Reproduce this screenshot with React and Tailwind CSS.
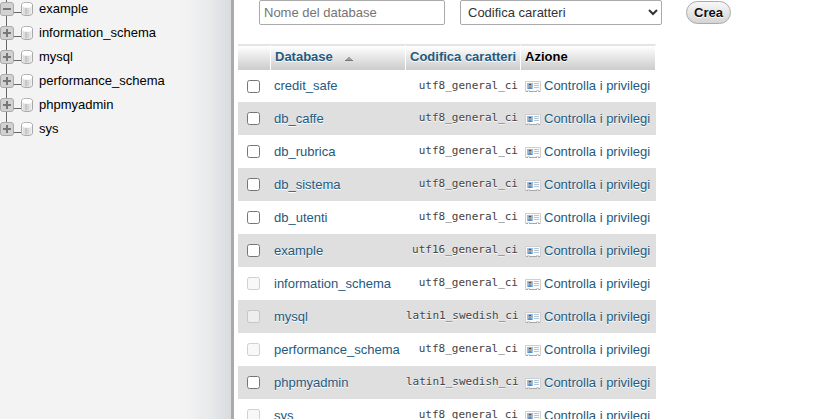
import React from "react";

const tree = [
  { name: "example", open: true },
  { name: "information_schema" },
  { name: "mysql" },
  { name: "performance_schema" },
  { name: "phpmyadmin" },
  { name: "sys" },
];

const databases = [
  { name: "credit_safe", collation: "utf8_general_ci" },
  { name: "db_caffe", collation: "utf8_general_ci" },
  { name: "db_rubrica", collation: "utf8_general_ci" },
  { name: "db_sistema", collation: "utf8_general_ci" },
  { name: "db_utenti", collation: "utf8_general_ci" },
  { name: "example", collation: "utf16_general_ci" },
  { name: "information_schema", collation: "utf8_general_ci", system: true },
  { name: "mysql", collation: "latin1_swedish_ci", system: true },
  { name: "performance_schema", collation: "utf8_general_ci", system: true },
  { name: "phpmyadmin", collation: "latin1_swedish_ci" },
  { name: "sys", collation: "utf8_general_ci", system: true },
];

function TreeIcon({ open, last }) {
  return (
    <svg width="34" height="24" viewBox="0 0 34 24" className="shrink-0" aria-hidden="true">
      <path d={last ? "M6.5 0V8" : "M6.5 0V24"} stroke="#666" />
      <path d="M13 15.5H21" stroke="#666" />
      <rect x="0.5" y="5.5" width="13" height="13" rx="2.5" fill="#d2d2d2" stroke="#aaa" />
      <path d={open ? "M3 12H11" : "M3 12H11M7 8V16"} stroke="#777" strokeWidth="2" />
      <path d="M21.5 7.5C21.5 4.8 32.5 4.8 32.5 7.5V16.5C32.5 19.2 21.5 19.2 21.5 16.5Z" fill="#f0f0f0" stroke="#a8a8a8" />
      <path d="M23 10V16.3Q24 17.4 25 17.6V10.8Z" fill="#dedede" />
      <path d="M25 10.8V17.6H27V11Z" fill="#c6c6c6" />
      <path d="M27 11V17.6H29V10.8Z" fill="#d6d6d6" />
      <path d="M29 10.8V17.6L31 16.5V10Z" fill="#e4e4e4" />
      <ellipse cx="27" cy="8.2" rx="4.8" ry="2.4" fill="#fff" />
    </svg>
  );
}

function CardIcon() {
  return (
    <svg width="16" height="16" viewBox="0 0 16 16" className="mt-0.5 shrink-0" aria-hidden="true">
      <path d="M0.5 2.5H15.5V12.5H13.5V11.5H11.5V12.5H4.5V11.5H2.5V12.5H0.5Z" fill="#fbfbfb" stroke="#cfcfcf" />
      <path d="M1 12.5H3M4 12.5H12M13 12.5H15" stroke="#a8a8a8" />
      <rect x="2" y="4" width="6" height="6" fill="#8fc0f0" />
      <path d="M3 10Q3 8 5 8T7 10Z" fill="#4a8ad0" />
      <circle cx="5" cy="6.5" r="1.5" fill="#c98f62" />
      <path d="M3.5 6Q5 3.5 6.5 6Z" fill="#6b4528" />
      <path d="M9 4.5H14M9 6.5H14M9 8.5H14" stroke="#b4c6d4" />
    </svg>
  );
}

const headCell =
  "border-r border-t-2 border-r-white border-t-[#e4e4e4] bg-linear-to-b from-white to-[#cccccc] p-0 pb-0.5 text-left font-bold [text-shadow:0_1px_0_#fff]";

export default function App() {
  return (
    <div className="flex h-screen overflow-hidden bg-white font-['Liberation_Sans',Arial,sans-serif] text-[13px] text-black">
      <aside className="w-[234px] shrink-0 border-r-3 border-[#aaaaaa] bg-linear-to-r from-[#f3f3f3] from-80% via-[#e9ebec] via-90% to-[#d8dcdf]">
        <nav aria-label="Database">
          <ul className="-mt-[3px]">
            {tree.map((item, i) => (
              <li key={item.name} className="flex h-6 items-center gap-1">
                <button type="button" aria-label={item.name} aria-expanded={!!item.open}>
                  <TreeIcon open={item.open} last={i === tree.length - 1} />
                </button>
                <a href="#" className="px-px">{item.name}</a>
              </li>
            ))}
          </ul>
        </nav>
      </aside>

      <main className="min-w-0 flex-1 pl-1">
        <form className="flex h-[25px] items-center pl-[21px]" onSubmit={(e) => e.preventDefault()}>
          <input
            type="text"
            aria-label="Nome del database"
            placeholder="Nome del database"
            className="mr-[15px] h-[25px] w-[186px] rounded-xs border border-[#aaaaaa] bg-white px-1 placeholder:text-[#757575]"
          />
          <select
            aria-label="Codifica caratteri"
            className="mr-6 h-[25px] w-[202px] rounded-xs border border-[#aaaaaa] bg-white px-[3px] text-[#333333]"
          >
            <option>Codifica caratteri</option>
          </select>
          <button
            type="submit"
            className="h-[23px] rounded-full border border-[#aaaaaa] bg-linear-to-b from-[#f8f8f8] to-[#d4d4d4] px-[7px] font-bold text-[#111111] [text-shadow:0_1px_0_#fff]"
          >
            Crea
          </button>
        </form>

        <table className="mt-[19px] w-[418px] table-fixed border-separate border-spacing-0">
          <colgroup>
            <col className="w-[33px]" />
            <col className="w-[135px]" />
            <col className="w-[115px]" />
            <col className="w-[135px]" />
          </colgroup>
          <thead>
            <tr className="h-[26px]">
              <th className={headCell}></th>
              <th className={headCell}>
                <a href="#" className="flex items-center gap-3 pl-1 text-[#235a81]">
                  Database
                  <svg width="8" height="6" viewBox="0 0 8 6" className="mt-1" aria-hidden="true">
                    <path d="M0 5V4H1V3H2V2H3V1H5V2H6V3H7V4H8V5Z" fill="#a0a0a0" />
                    <path d="M0 4H8V5H0Z" fill="#777" />
                  </svg>
                </a>
              </th>
              <th className={headCell}>
                <a href="#" className="block whitespace-nowrap pl-1 text-[#235a81]">Codifica caratteri</a>
              </th>
              <th className={headCell}>
                <span className="block pl-1">Azione</span>
              </th>
            </tr>
          </thead>
          <tbody>
            {databases.map((db) => (
              <tr key={db.name} className="h-[33px] first:h-8 even:bg-[#dfdfdf] even:[text-shadow:0_1px_0_#fff]">
                <td className="p-0">
                  <input
                    type="checkbox"
                    aria-labelledby={`db-${db.name}`}
                    disabled={db.system}
                    className="ml-[9px] block size-[13px]"
                  />
                </td>
                <td className="p-0 pl-[3px]">
                  <a id={`db-${db.name}`} href="#" className="text-[#235a81]">{db.name}</a>
                </td>
                <td className="p-0 pr-[3px] text-right font-['DejaVu_Sans_Mono',monospace] text-[11px] text-[#444444]">
                  {db.collation}
                </td>
                <td className="p-0 pl-1">
                  <a href="#" className="flex items-center gap-[3px] whitespace-nowrap text-[#235a81]">
                    <CardIcon />
                    Controlla i privilegi
                  </a>
                </td>
              </tr>
            ))}
          </tbody>
        </table>
      </main>
    </div>
  );
}
